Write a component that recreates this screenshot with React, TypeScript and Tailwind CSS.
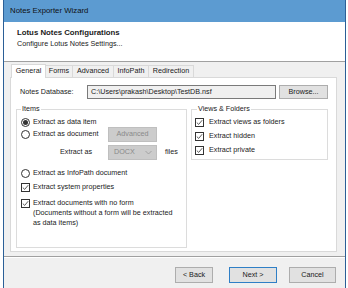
import React from "react";

const font = { fontFamily: '"Liberation Sans", Arial, sans-serif' };

function Radio({ checked }: { checked?: boolean }) {
  return (
    <span className="w-[9px] h-[9px] rounded-full border border-[#333] bg-white flex items-center justify-center shrink-0">
      {checked && <span className="w-[5px] h-[5px] rounded-full bg-[#333]" />}
    </span>
  );
}

function Check() {
  return (
    <span className="w-[9px] h-[9px] border border-[#333] bg-white flex items-center justify-center shrink-0">
      <svg width="7" height="7" viewBox="0 0 7 7">
        <path d="M0.8 3.6 L2.7 5.4 L6.2 1.2" fill="none" stroke="#333" strokeWidth="0.8" />
      </svg>
    </span>
  );
}

export default function App() {
  return (
    <div className="w-[348px] h-[288px] bg-white overflow-hidden text-[7.2px] text-[#1a1a1a]" style={font}>
      <div className="ml-[3px] w-[343px] h-[288px] border-x border-[#2b5f97] flex flex-col bg-[#f0f0f0]">
        <div className="h-[22px] shrink-0 bg-[#5c9bd1] flex items-center pl-[6px] text-[7.8px] text-[#111]">
          Notes Exporter Wizard
        </div>
        <div className="h-[40px] shrink-0 bg-white border-b border-[#a0a0a0] pl-[13px] pt-[5px] flex flex-col">
          <div className="font-bold text-[7.8px] leading-[11px]">Lotus Notes Configurations</div>
          <div className="leading-[11px]">Configure Lotus Notes Settings...</div>
        </div>
        <div className="flex flex-col pl-[6px] pt-[2px]">
          <div className="flex items-end h-[13px] ml-[1px]">
            <div className="w-[35px] h-[14px] bg-white border border-b-0 border-[#d9d9d9] flex items-center justify-center relative z-10 mb-[-1px]">General</div>
            <div className="w-[27px] h-[12px] border-t border-r border-[#d9d9d9] flex items-center justify-center">Forms</div>
            <div className="w-[41px] h-[12px] border-t border-r border-[#d9d9d9] flex items-center justify-center">Advanced</div>
            <div className="w-[35px] h-[12px] border-t border-r border-[#d9d9d9] flex items-center justify-center">InfoPath</div>
            <div className="w-[45px] h-[12px] border-t border-r border-[#d9d9d9] flex items-center justify-center">Redirection</div>
          </div>
          <div className="w-[327px] h-[175px] bg-white border border-[#d9d9d9] flex flex-col pl-[5px] pt-[7px]">
            <div className="flex items-center h-[14px]">
              <span className="w-[71px] pl-[4px]">Notes Database:</span>
              <div className="w-[189px] h-[14px] border border-[#7a7a7a] bg-[#f0f0f0] flex items-center pl-[3px]">
                C:\Users\prakash\Desktop\TestDB.nsf
              </div>
              <div className="ml-[3px] w-[49px] h-[14px] border border-[#adadad] bg-[#e1e1e1] flex items-center justify-center">
                Browse...
              </div>
            </div>
            <div className="flex mt-[10px]">
              <div className="w-[171px] h-[139px] border border-[#dcdcdc] relative pl-[4px] pt-[7px] flex flex-col">
                <span className="absolute left-[4px] top-[-6px] bg-white px-[1px] leading-[10px]">Items</span>
                <div className="flex items-center gap-[3px] h-[10px]">
                  <Radio checked />
                  <span>Extract as data item</span>
                </div>
                <div className="flex items-center h-[15px]">
                  <div className="flex items-center gap-[3px] w-[87px]">
                    <Radio />
                    <span>Extract as document</span>
                  </div>
                  <div className="w-[49px] h-[15px] bg-[#cccccc] border border-[#bfbfbf] text-[#8a8a8a] flex items-center justify-center">
                    Advanced
                  </div>
                </div>
                <div className="flex items-center h-[15px] mt-[3px]">
                  <span className="w-[87px] text-right pr-[16px]">Extract as</span>
                  <div className="w-[49px] h-[15px] bg-[#cccccc] border border-[#bfbfbf] text-[#8a8a8a] flex items-center justify-between pl-[5px] pr-[4px]">
                    <span>DOCX</span>
                    <svg width="7" height="5" viewBox="0 0 7 5">
                      <path d="M0.5 1 L3.5 4 L6.5 1" fill="none" stroke="#9a9a9a" strokeWidth="0.8" />
                    </svg>
                  </div>
                  <span className="ml-[8px]">files</span>
                </div>
                <div className="flex items-center gap-[3px] h-[12px] mt-[7px]">
                  <Radio />
                  <span>Extract as InfoPath document</span>
                </div>
                <div className="flex items-center gap-[3px] h-[12px] mt-[2px]">
                  <Check />
                  <span>Extract system properties</span>
                </div>
                <div className="flex gap-[3px] mt-[5px]">
                  <div className="h-[10px] flex items-center"><Check /></div>
                  <div className="leading-[10px] whitespace-nowrap">
                    Extract documents with no form<br />
                    (Documents without a form will be extracted<br />
                    as data items)
                  </div>
                </div>
              </div>
              <div className="ml-[4px] w-[137px] h-[51px] border border-[#dcdcdc] relative pl-[3px] pt-[6px] flex flex-col gap-[2px]">
                <span className="absolute left-[5px] top-[-6px] bg-white px-[1px] leading-[10px]">Views &amp; Folders</span>
                <div className="flex items-center gap-[5px] h-[12px]">
                  <Check />
                  <span>Extract views as folders</span>
                </div>
                <div className="flex items-center gap-[5px] h-[12px]">
                  <Check />
                  <span>Extract hidden</span>
                </div>
                <div className="flex items-center gap-[5px] h-[12px]">
                  <Check />
                  <span>Extract private</span>
                </div>
              </div>
            </div>
          </div>
        </div>
        <div className="mt-[4px] border-t border-[#a0a0a0] border-b border-b-white" />
        <div className="flex justify-end pr-[9px] mt-[9px]">
          <div className="w-[38px] h-[16px] border border-[#adadad] bg-[#e1e1e1] flex items-center justify-center">&lt; Back</div>
          <div className="ml-[16px] w-[48px] h-[16px] border border-[#2f7fc6] bg-[#e1e1e1] flex items-center justify-center">Next &gt;</div>
          <div className="ml-[12px] w-[47px] h-[16px] border border-[#adadad] bg-[#e1e1e1] flex items-center justify-center">Cancel</div>
        </div>
      </div>
    </div>
  );
}
